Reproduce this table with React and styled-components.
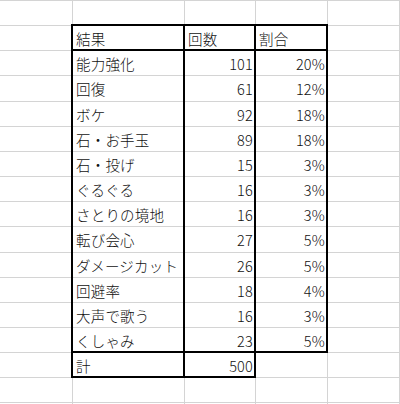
import React from "react";
import styled, { createGlobalStyle } from "styled-components";

const GlobalStyle = createGlobalStyle`
  html, body { margin: 0; padding: 0; background: #ffffff; }
  body { font-family: "Noto Sans CJK JP", "Noto Sans", sans-serif; }
`;

const ROW_HEIGHTS = [25, 25, 25, 26, 25, 25, 25, 25, 25, 26, 25, 25, 25, 25, 25, 25, 25];

const Sheet = styled.div`
  display: grid;
  grid-template-columns: 73px 112px 71px 72px 1fr;
  grid-template-rows: ${ROW_HEIGHTS.map((h) => `${h}px`).join(" ")};
  width: 400px;
  height: 404px;
  overflow: hidden;
  border-top: 1px solid #d4d4d4;
  background: #ffffff;
`;

const Cell = styled.div`
  position: relative;
  box-sizing: border-box;
  display: flex;
  align-items: center;
  justify-content: ${(p) => (p.$align === "right" ? "flex-end" : "flex-start")};
  padding: 2px ${(p) => (p.$align === "right" ? "2px" : "0")} 0 ${(p) => (p.$align === "right" ? "0" : "3px")};
  border-right: 1px solid #d4d4d4;
  border-bottom: 1px solid #d4d4d4;
  font-size: 14.5px;
  font-weight: 300;
  line-height: 1;
  color: #111111;
  white-space: nowrap;
  letter-spacing: 0.2px;

  &::after {
    content: "";
    display: ${(p) => (p.$bt || p.$bl || p.$br || p.$bb ? "block" : "none")};
    position: absolute;
    top: -2px;
    left: -2px;
    right: -1px;
    bottom: -1px;
    border-style: solid;
    border-color: #000000;
    border-width: ${(p) => `${p.$bt}px ${p.$br}px ${p.$bb}px ${p.$bl}px`};
    pointer-events: none;
    z-index: 1;
  }
`;

const header = ["結果", "回数", "割合"];
const data = [
  ["能力強化", "101", "20%"],
  ["回復", "61", "12%"],
  ["ボケ", "92", "18%"],
  ["石・お手玉", "89", "18%"],
  ["石・投げ", "15", "3%"],
  ["ぐるぐる", "16", "3%"],
  ["さとりの境地", "16", "3%"],
  ["転び会心", "27", "5%"],
  ["ダメージカット", "26", "5%"],
  ["回避率", "18", "4%"],
  ["大声で歌う", "16", "3%"],
  ["くしゃみ", "23", "5%"],
];

function buildRows() {
  const rows = [];
  rows.push(["", "", "", "", ""]);
  rows.push(["", ...header, ""]);
  data.forEach((d) => rows.push(["", ...d, ""]));
  rows.push(["", "計", "500", "", ""]);
  rows.push(["", "", "", "", ""]);
  rows.push(["", "", "", "", ""]);
  return rows;
}

function bordersFor(r, c) {
  const inBox = (c >= 1 && c <= 3 && r >= 1 && r <= 13) || (r === 14 && c >= 1 && c <= 2);
  if (!inBox) return { bt: 0, bl: 0, br: 0, bb: 0 };
  return {
    bl: 2,
    bt: r === 1 || r === 2 || r === 14 ? 2 : 0,
    br: (c === 3 && r <= 13) || (c === 2 && r === 14) ? 2 : 0,
    bb: r === 14 || (r === 13 && c === 3) ? 2 : 0,
  };
}

export default function App() {
  const rows = buildRows();
  return (
    <>
      <GlobalStyle />
      <Sheet>
        {rows.map((row, r) =>
          row.map((text, c) => {
            const b = bordersFor(r, c);
            const right = r >= 2 && (c === 2 || c === 3);
            return (
              <Cell
                key={`${r}-${c}`}
                $align={right ? "right" : "left"}
                $bt={b.bt}
                $bl={b.bl}
                $br={b.br}
                $bb={b.bb}
              >
                {text}
              </Cell>
            );
          })
        )}
      </Sheet>
    </>
  );
}
